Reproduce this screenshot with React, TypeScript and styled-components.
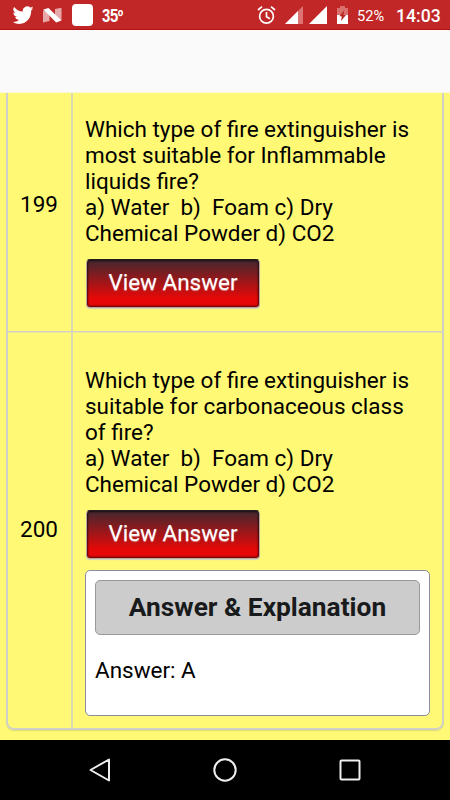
import React from 'react';
import styled, { createGlobalStyle } from 'styled-components';

const GlobalStyle = createGlobalStyle`
  * { box-sizing: border-box; }
  body { margin: 0; background: #fff976; }
`;

const Screen = styled.div`
  width: 450px;
  height: 800px;
  display: flex;
  flex-direction: column;
  overflow: hidden;
  background: #fff975;
  color: #000;
  font-family: Roboto, sans-serif;
  font-size: 22.48px;
  font-weight: 400;
  line-height: 26.2px;
`;

const StatusBar = styled.header`
  flex: none;
  height: 30px;
  display: flex;
  align-items: center;
  justify-content: space-between;
  padding: 1px 11px 0 12px;
  background: #c12727;
  border-bottom: 1px solid #b50f10;
  color: #fff;
`;

const StatusGroup = styled.div`
  display: flex;
  align-items: center;
  height: 28px;
  svg { display: block; flex: none; }
`;

const AppIcon = styled.span`
  width: 21px;
  height: 22px;
  margin: 0 9px 0 9px;
  border-radius: 4px;
  background: #fff;
`;

const Temperature = styled.span`
  font: 700 18px/28px 'Liberation Sans', sans-serif;
  width: 22px;
  white-space: nowrap;
  transform: scaleX(0.83);
  transform-origin: left;
  padding-top: 2px;
  letter-spacing: -0.5px;
`;

const Battery = styled.span`
  width: 28px;
  margin: 1px 11px 0 9px;
  font-size: 14.6px;
  font-weight: 400;
  line-height: 28px;
  white-space: nowrap;
`;

const Clock = styled.span`
  width: 43px;
  margin-top: 1px;
  font-size: 17.6px;
  font-weight: 500;
  line-height: 28px;
  white-space: nowrap;
`;

const Header = styled.div`
  flex: none;
  height: 63px;
  background: #fafafa;
  border-bottom: 1px solid #fbf9d8;
`;

const Content = styled.main`
  flex: none;
  height: 647px;
  padding: 0 6px 10px;
`;

const Table = styled.section`
  height: 637px;
  border: 2px solid #d0d0c6;
  border-top: 0;
  border-radius: 0 0 8px 8px;
  box-shadow: 0 1px 1px rgba(120, 120, 110, 0.25);
`;

const Row = styled.div<{ $height: number }>`
  height: ${(p) => p.$height}px;
  display: grid;
  grid-template-columns: 65px 1fr;
  & + & { border-top: 1px solid #d2d2c4; box-shadow: inset 0 1px 0 #e9e5a4; }
`;

const NumberCell = styled.div<{ $top: number }>`
  padding-top: ${(p) => p.$top}px;
  padding-right: 1px;
  border-right: 2px solid #dbd9b2;
  text-align: center;
`;

const QuestionCell = styled.div<{ $top: number }>`
  padding: ${(p) => p.$top}px 12px 0 12px;
`;

const Line = styled.div`
  white-space: pre;
  height: 26.2px;
`;

const ViewButton = styled.button`
  display: block;
  width: 174px;
  height: 49px;
  margin: 12.5px 0 0 1px;
  padding: 0 0 2px;
  border: 1px solid #b9a9a0;
  border-top-color: #221c20;
  border-radius: 4px;
  background: linear-gradient(#42282f, #e60808 82%);
  box-shadow: inset 0 0 2px 1px rgba(0, 0, 0, 0.65), 0 1px 1px #d2cfc4;
  color: #fff;
  font: 400 22.48px/26px Roboto, sans-serif;
  text-shadow: 0 1px 1px rgba(255, 255, 255, 0.5);
`;

const AnswerPanel = styled.div`
  width: 345px;
  height: 146px;
  margin-top: 11px;
  padding: 9px;
  border: 1px solid #8b8ba4;
  border-radius: 5px;
  background: #fff;
`;

const AnswerTitle = styled.h3`
  margin: 0;
  width: 325px;
  height: 55px;
  border: 1px solid #999;
  border-radius: 5px;
  background: #ccc;
  color: #191a1b;
  font-size: 26.3px;
  font-weight: 700;
  line-height: 53px;
  text-align: center;
  white-space: nowrap;
`;

const AnswerText = styled.p`
  margin: 22px 0 0;
`;

const NavBar = styled.nav`
  flex: none;
  height: 60px;
  display: flex;
  align-items: center;
  justify-content: space-between;
  padding: 0 88px;
  background: #000;
`;

const TwitterIcon = () => (
  <svg width="22" height="22" viewBox="0 0 24 24" fill="#fff">
    <path d="M23 4.57a10 10 0 0 1-2.2.77 4.96 4.96 0 0 0 2.16-2.72c-.95.55-2 .95-3.13 1.18a4.92 4.92 0 0 0-8.08 4.48C8 8.1 4.57 6.13 2.3 3.16a4.93 4.93 0 0 0 1.52 6.57 4.9 4.9 0 0 1-2.23-.61v.06a4.92 4.92 0 0 0 3.95 4.83 5 5 0 0 1-2.21.08 4.94 4.94 0 0 0 4.3 3.42A9.87 9.87 0 0 1 .9 19.54a13.99 13.99 0 0 0 7.05 2.21c8.65 0 13-7.5 13-13.98v-.63A9.94 9.94 0 0 0 23 4.57z" />
  </svg>
);

const NougatIcon = () => (
  <svg width="29" height="22" viewBox="0 0 29 22">
    <path d="M9 6.2v12.2l6.5-1.5V9zM21 5l6.5-1.3v12.5l-6.5-3z" fill="#fff" opacity=".6" />
    <path d="M9.3 5.4l5.2-1.4 13 12.4-5.3 2.2z" fill="#fff" />
  </svg>
);

const StatusIcons = () => (
  <svg width="92" height="28" viewBox="0 0 92 28">
    <g fill="none" stroke="#fff" strokeWidth="1.7">
      <circle cx="10.5" cy="15.3" r="6.9" />
      <path d="M10.5 11v4.7l3.4 2.1M2 9l4-3.3M19 9l-4-3.3" />
    </g>
    <path d="M47 5v18H29z" fill="#dd7272" />
    <path d="M42 10V23H29z" fill="#fff" />
    <path d="M71 5v18H53z" fill="#fff" />
    <path d="M84 5h5v2h4v7H81V7h3z" fill="#da706b" />
    <path d="M81 14h12v9H81z" fill="#fff" />
    <path d="M88.3 9.3l-5 6h2.5L85 20l5-6h-2.6z" fill="#b92725" />
  </svg>
);

interface Question {
  id: number;
  height: number;
  numberTop: number;
  top: number;
  lines: string[];
  answer?: string;
}

const questions: Question[] = [
  {
    id: 199, height: 238, numberTop: 98, top: 22.5,
    lines: ['Which type of fire extinguisher is', 'most suitable for Inflammable', 'liquids fire?', 'a) Water  b)  Foam c) Dry', 'Chemical Powder d) CO2'],
  },
  {
    id: 200, height: 397, numberTop: 184, top: 34.5,
    lines: ['Which type of fire extinguisher is', 'suitable for carbonaceous class', 'of fire?', 'a) Water  b)  Foam c) Dry', 'Chemical Powder d) CO2'],
    answer: 'A',
  },
];

export default function App() {
  return (
    <Screen>
      <GlobalStyle />
      <StatusBar>
        <StatusGroup>
          <TwitterIcon />
          <NougatIcon />
          <AppIcon />
          <Temperature>35º</Temperature>
        </StatusGroup>
        <StatusGroup>
          <StatusIcons />
          <Battery>52%</Battery>
          <Clock>14:03</Clock>
        </StatusGroup>
      </StatusBar>
      <Header />
      <Content>
        <Table>
          {questions.map((q) => (
            <Row key={q.id} $height={q.height}>
              <NumberCell $top={q.numberTop}>{q.id}</NumberCell>
              <QuestionCell $top={q.top}>
                {q.lines.map((line) => <Line key={line}>{line}</Line>)}
                <ViewButton>View Answer</ViewButton>
                {q.answer && (
                  <AnswerPanel>
                    <AnswerTitle>Answer &amp; Explanation</AnswerTitle>
                    <AnswerText>Answer: {q.answer}</AnswerText>
                  </AnswerPanel>
                )}
              </QuestionCell>
            </Row>
          ))}
        </Table>
      </Content>
      <NavBar>
        <svg width="24" height="26" viewBox="0 0 24 26" fill="none" stroke="#eee" strokeWidth="2" strokeLinejoin="round">
          <path d="M21 2.5v21L2.5 13z" />
        </svg>
        <svg width="26" height="26" viewBox="0 0 26 26" fill="none" stroke="#eee" strokeWidth="2">
          <circle cx="13" cy="13" r="10.7" />
        </svg>
        <svg width="24" height="26" viewBox="0 0 24 26" fill="none" stroke="#eee" strokeWidth="2">
          <rect x="2.5" y="3.5" width="19" height="19" rx="1" />
        </svg>
      </NavBar>
    </Screen>
  );
}
